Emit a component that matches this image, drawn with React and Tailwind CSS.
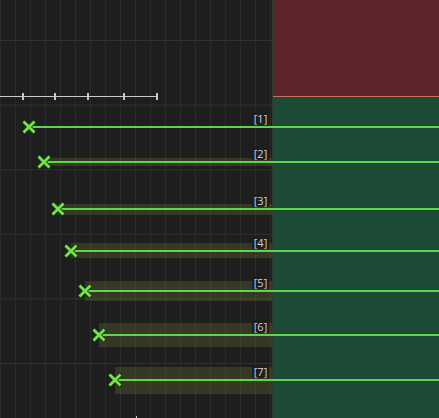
import React from 'react'

const rows = [
  { n: 1, y: 126.5, x: 29, band: 0 },
  { n: 2, y: 161.5, x: 44, band: 8 },
  { n: 3, y: 209, x: 58, band: 11 },
  { n: 4, y: 250.5, x: 71, band: 15 },
  { n: 5, y: 291, x: 85, band: 20 },
  { n: 6, y: 335, x: 99, band: 24 },
  { n: 7, y: 380, x: 115, band: 27 },
]

const ticks = [23, 55, 88, 124, 157]

function Cross() {
  return (
    <svg width="14" height="14" viewBox="0 0 14 14" className="block">
      <path d="M2.5 2.5 L11.5 11.5 M11.5 2.5 L2.5 11.5" stroke="#163016" strokeWidth="4.5" strokeLinecap="square" />
      <path d="M2.5 2.5 L11.5 11.5 M11.5 2.5 L2.5 11.5" stroke="#74e446" strokeWidth="2.8" strokeLinecap="square" />
    </svg>
  )
}

function Ruler() {
  // ticks sit on a thin baseline, spacing read off the screenshot
  return (
    <div className="absolute left-0 top-[93px] h-[7px] w-[158px]">
      <div className="absolute left-0 top-[3px] h-px w-full bg-[#c9c9c9]" />
      {ticks.map((x) => (
        <div key={x} className="absolute top-0 h-[7px] w-[2px] bg-[#c9c9c9]" style={{ left: x - 1 }} />
      ))}
    </div>
  )
}

export default function App() {
  return (
    <div className="relative h-[418px] w-[439px] overflow-hidden bg-[#1e1e1e] font-['Open_Sans',sans-serif]">
      <div className="flex h-full">
        <div className="relative h-full w-[272px] overflow-hidden bg-[linear-gradient(90deg,#2b2b2b_1px,transparent_1px),linear-gradient(#313131_1px,transparent_1px)] bg-[size:15px_100%,100%_64.6px] bg-[position:15px_0,0_40px]">
          {rows.map((r) =>
            r.band ? (
              <div
                key={r.n}
                className="absolute right-0 bg-[#636a34]/35"
                style={{ left: r.x, top: r.y - r.band / 2, height: r.band }}
              />
            ) : null
          )}
          <Ruler />
          <div className="absolute bottom-0 left-[136px] h-[2px] w-px bg-[#d0d0d0]" />
        </div>
        <div className="flex h-full flex-1 flex-col border-l border-[#2f3a33]">
          <div className="h-[96px] bg-[#5e242b]" />
          <div className="h-px bg-[#c7725f]" />
          <div className="flex-1 bg-[#1c4a35]" />
        </div>
      </div>

      {rows.map((r) => (
        <div key={r.n} className="absolute right-0 h-[14px]" style={{ left: r.x - 7, top: r.y - 7 }}>
          <div className="absolute left-[7px] right-0 top-[6px] h-[2px] bg-[#5bd849]" />
          <div className="absolute left-0 top-0">
            <Cross />
          </div>
          <div
            className="absolute top-[-8px] w-[17px] bg-[#1e1e1e] text-center text-[11px] leading-[13px] text-[#d2d2d2]"
            style={{ left: 252 - (r.x - 7) }}
          >
            [{r.n}]
          </div>
        </div>
      ))}
    </div>
  )
}
